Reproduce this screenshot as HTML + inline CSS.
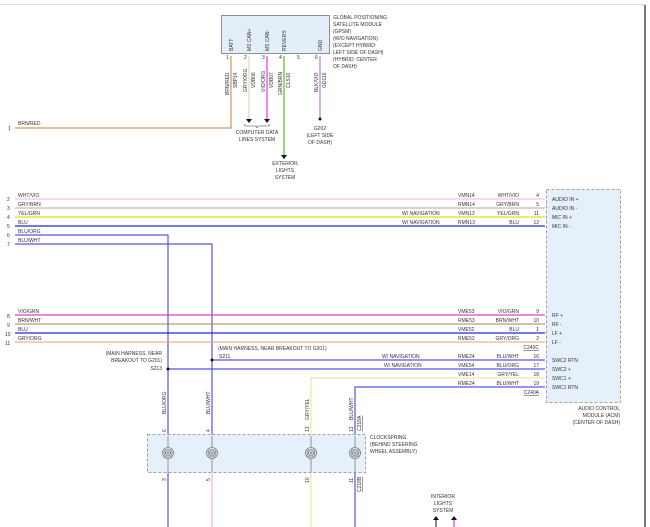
<!DOCTYPE html>
<html><head><meta charset="utf-8"><style>
html,body{margin:0;padding:0;background:#fff;width:650px;height:527px;overflow:hidden}
svg text{font-family:"Liberation Sans",sans-serif;font-size:5px;fill:#333}
</style></head><body>
<svg width="650" height="527" viewBox="0 0 650 527" xmlns="http://www.w3.org/2000/svg">
<line x1="0" y1="4.5" x2="645" y2="4.5" stroke="#ddd" stroke-width="1"/>
<line x1="645" y1="5" x2="645" y2="527" stroke="#555" stroke-width="1.6"/>

<!-- GPSM -->
<rect x="221.5" y="15.5" width="108" height="38" fill="#e3eef8" stroke="#777" stroke-width="0.8"/>
<g text-anchor="start">
<text x="333" y="19">GLOBAL POSITIONING</text>
<text x="333" y="26">SATELLITE MODULE</text>
<text x="333" y="33">(GPSM)</text>
<text x="333" y="40">(W/O NAVIGATION)</text>
<text x="333" y="47">(EXCEPT HYBRID:</text>
<text x="333" y="54">LEFT SIDE OF DASH)</text>
<text x="333" y="61">(HYBRID: CENTER</text>
<text x="333" y="68">OF DASH)</text>
</g>
<g font-size="5">
<text transform="translate(233,51) rotate(-90)">BATT</text>
<text transform="translate(251,51) rotate(-90)">MS CAN+</text>
<text transform="translate(269,51) rotate(-90)">MS CAN-</text>
<text transform="translate(286,51) rotate(-90)">REVERS</text>
<text transform="translate(322,51) rotate(-90)">GND</text>
<text x="226" y="59">1</text><text x="244" y="59">2</text><text x="262" y="59">3</text><text x="279" y="59">4</text><text x="297" y="59">5</text><text x="315" y="59">6</text>
<text transform="translate(229,95) rotate(-90)">BRN/RED</text>
<text transform="translate(237,88) rotate(-90)">SBP14</text>
<text transform="translate(247,92) rotate(-90)">GRY/ORG</text>
<text transform="translate(255,88) rotate(-90)">VDB06</text>
<text transform="translate(265,92) rotate(-90)">VIO/ORG</text>
<text transform="translate(273,88) rotate(-90)">VDB07</text>
<text transform="translate(282,95) rotate(-90)">GRN/BRN</text>
<text transform="translate(290,88) rotate(-90)">CLS10</text>
<text transform="translate(318,92) rotate(-90)">BLK/VIO</text>
<text transform="translate(326,88) rotate(-90)">GD116</text>
</g>
<path d="M231 56 V128 H15" fill="none" stroke="#c87a40" stroke-width="1"/>
<path d="M249 56 V120" stroke="#e8c8a0" stroke-width="1"/>
<path d="M267 56 V120" stroke="#f030f0" stroke-width="1.2"/>
<path d="M284 56 V156" stroke="#50c020" stroke-width="1.2"/>
<path d="M320 56 V118" stroke="#a060c0" stroke-width="1"/>
<path d="M246 119 h6 l-3 4z M264 119 h6 l-3 4z M281 155 h6 l-3 4z" fill="#111"/>
<circle cx="320" cy="119" r="1.5" fill="#111"/>
<path d="M244 124 q0 2 2 2 h9 q2 0 2 2 q0-2 2-2 h9 q2 0 2-2" fill="none" stroke="#333" stroke-width="0.5"/>
<g text-anchor="middle">
<text x="257" y="134">COMPUTER DATA</text><text x="257" y="141">LINES SYSTEM</text>
<text x="320" y="130">G202</text><text x="320" y="137">(LEFT SIDE</text><text x="320" y="144">OF DASH)</text>
<text x="285" y="165">EXTERIOR</text><text x="285" y="172">LIGHTS</text><text x="285" y="179">SYSTEM</text>
</g>
<text x="8" y="130">1</text><text x="18" y="125">BRN/RED</text>

<!-- ACM -->
<rect x="546.5" y="189.5" width="74" height="213" fill="#e6f0fa" stroke="#888" stroke-width="0.8" stroke-dasharray="3,2"/>
<g>
<text x="552" y="201">AUDIO IN +</text><text x="552" y="210">AUDIO IN -</text><text x="552" y="219">MIC IN +</text><text x="552" y="228">MIC IN -</text>
<text x="552" y="317">RF +</text><text x="552" y="326">RF -</text><text x="552" y="335">LF +</text><text x="552" y="344">LF -</text>
<text x="552" y="362">SWC2 RTN</text><text x="552" y="371">SWC2 +</text><text x="552" y="380">SWC1 +</text><text x="552" y="389">SWC1 RTN</text>
</g>
<g text-anchor="end">
<text x="620" y="410">AUDIO CONTROL</text><text x="620" y="417">MODULE (ACM)</text><text x="620" y="424">(CENTER OF DASH)</text>
</g>

<!-- horizontal wires -->
<g fill="none">
<path d="M15 199 H545" stroke="#f4b0e8" stroke-width="1"/>
<path d="M15 208 H545" stroke="#b8a890" stroke-width="1"/>
<path d="M15 217 H545" stroke="#e0e010" stroke-width="1.2"/>
<path d="M15 226 H545" stroke="#1a2ae0" stroke-width="1.2"/>
<path d="M15 235 H168 V527" stroke="#5555ee" stroke-width="1.2"/>
<path d="M15 244 H212 V436" stroke="#5555ee" stroke-width="1.2"/>
<path d="M15 315 H545" stroke="#e040c0" stroke-width="1.2"/>
<path d="M15 324 H545" stroke="#a08060" stroke-width="1"/>
<path d="M15 333 H545" stroke="#1a2ae0" stroke-width="1.2"/>
<path d="M15 342 H545" stroke="#e0a070" stroke-width="1"/>
<path d="M212 360 H545" stroke="#5555ee" stroke-width="1.2"/>
<path d="M168 369 H545" stroke="#5555ee" stroke-width="1.2"/>
<path d="M311 436 V378 H545" stroke="#e6e690" stroke-width="1"/>
<path d="M355 436 V387 H545" stroke="#5555ee" stroke-width="1.2"/>
<path d="M212 472 V527" stroke="#f0a0f0" stroke-width="1"/>
<path d="M311 472 V527" stroke="#e6e690" stroke-width="1"/>
<path d="M355 472 V527" stroke="#5555ee" stroke-width="1.2"/>
</g>
<circle cx="168" cy="369" r="1.5" fill="#111"/><circle cx="212" cy="360" r="1.5" fill="#111"/>
<g>
<text x="7" y="201">2</text><text x="18" y="197">WHT/VIO</text>
<text x="7" y="210">3</text><text x="18" y="206">GRY/BRN</text>
<text x="7" y="219">4</text><text x="18" y="215">YEL/GRN</text>
<text x="7" y="228">5</text><text x="18" y="224">BLU</text>
<text x="7" y="237">6</text><text x="18" y="233">BLU/ORG</text>
<text x="7" y="246">7</text><text x="18" y="242">BLU/WHT</text>
<text x="7" y="318">8</text><text x="18" y="313">VIO/GRN</text>
<text x="7" y="327">9</text><text x="18" y="322">BRN/WHT</text>
<text x="5" y="336">10</text><text x="18" y="331">BLU</text>
<text x="5" y="345">11</text><text x="18" y="340">GRY/ORG</text>
</g>
<g>
<text x="458" y="197">VMN14</text><text x="458" y="206">RMN14</text><text x="458" y="215">VMN13</text><text x="458" y="224">RMN13</text>
<text x="458" y="313">VME53</text><text x="458" y="322">RME53</text><text x="458" y="331">VME52</text><text x="458" y="340">RME52</text>
<text x="458" y="358">RME24</text><text x="458" y="367">VME54</text><text x="458" y="376">VME14</text><text x="458" y="385">RME24</text>
<text x="402" y="215">W/ NAVIGATION</text><text x="402" y="224">W/ NAVIGATION</text>
<text x="382" y="358">W/ NAVIGATION</text><text x="384" y="367">W/ NAVIGATION</text>
</g>
<g text-anchor="end">
<text x="519" y="197">WHT/VIO</text><text x="519" y="206">GRY/BRN</text><text x="519" y="215">YEL/GRN</text><text x="519" y="224">BLU</text>
<text x="519" y="313">VIO/GRN</text><text x="519" y="322">BRN/WHT</text><text x="519" y="331">BLU</text><text x="519" y="340">GRY/ORG</text>
<text x="519" y="358">BLU/WHT</text><text x="519" y="367">BLU/ORG</text><text x="519" y="376">GRY/YEL</text><text x="519" y="385">BLU/WHT</text>
<text x="539" y="197">4</text><text x="539" y="206">5</text><text x="539" y="215">11</text><text x="539" y="224">12</text>
<text x="539" y="313">9</text><text x="539" y="322">10</text><text x="539" y="331">1</text><text x="539" y="340">2</text>
<text x="539" y="358">16</text><text x="539" y="367">17</text><text x="539" y="376">18</text><text x="539" y="385">19</text>
<text x="539" y="349" text-decoration="underline">C240C</text><text x="539" y="394" text-decoration="underline">C240A</text>
<text x="162" y="355">(MAIN HARNESS, NEAR</text><text x="162" y="362">BREAKOUT TO G201)</text><text x="162" y="370">S213</text>
</g>
<text x="218" y="350">(MAIN HARNESS, NEAR BREAKOUT TO G201)</text><text x="219" y="358">S211</text>

<!-- clockspring -->
<rect x="147.5" y="434.5" width="218" height="38" fill="#e6f0fa" stroke="#888" stroke-width="0.8" stroke-dasharray="3,2"/>
<g fill="none" stroke="#555" stroke-width="0.6">
<g transform="translate(168,453)"><circle r="5.5"/><circle r="4"/><circle r="2.5"/><circle r="1"/></g>
<g transform="translate(212,453)"><circle r="5.5"/><circle r="4"/><circle r="2.5"/><circle r="1"/></g>
<g transform="translate(311,453)"><circle r="5.5"/><circle r="4"/><circle r="2.5"/><circle r="1"/></g>
<g transform="translate(355,453)"><circle r="5.5"/><circle r="4"/><circle r="2.5"/><circle r="1"/></g>
<path d="M168 436V447M168 459V472M212 436V447M212 459V472M311 436V447M311 459V472M355 436V447M355 459V472"/>
</g>
<text x="370" y="439">CLOCKSPRING</text><text x="370" y="446">(BEHIND STEERING</text><text x="370" y="453">WHEEL ASSEMBLY)</text>
<g>
<text transform="translate(166,414) rotate(-90)">BLU/ORG</text>
<text transform="translate(210,414) rotate(-90)">BLU/WHT</text>
<text transform="translate(309,420) rotate(-90)">GRY/YEL</text>
<text transform="translate(353,420) rotate(-90)">BLU/WHT</text>
<text transform="translate(361,431) rotate(-90)" text-decoration="underline">C218A</text>
<text transform="translate(166,432) rotate(-90)">6</text><text transform="translate(210,432) rotate(-90)">4</text>
<text transform="translate(309,432) rotate(-90)">13</text><text transform="translate(353,432) rotate(-90)">12</text>
<text transform="translate(166,481) rotate(-90)">3</text><text transform="translate(210,481) rotate(-90)">5</text>
<text transform="translate(309,483) rotate(-90)">10</text><text transform="translate(353,483) rotate(-90)">11</text>
<text transform="translate(361,492) rotate(-90)" text-decoration="underline">C218B</text>
</g>
<g text-anchor="middle"><text x="443" y="498">INTERIOR</text><text x="443" y="505">LIGHTS</text><text x="443" y="512">SYSTEM</text></g>
<path d="M436 519 V527" stroke="#111" stroke-width="1"/><path d="M454 519 V527" stroke="#f030f0" stroke-width="1.2"/>
<path d="M433 520 h6 l-3 -4z M451 520 h6 l-3 -4z" fill="#111"/>
</svg>
</body></html>
